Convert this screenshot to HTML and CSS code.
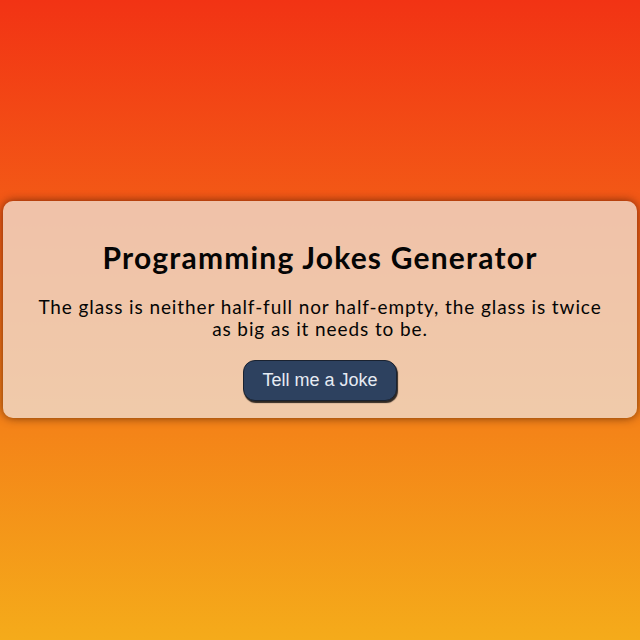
FILE: index.html
```html
<!DOCTYPE html>
<html>
<head>
<meta charset="utf-8">
<link rel="stylesheet" href="styles.css">
</head>
<body>
<div class="page">
  <div class="card">
    <h1 class="title">Programming Jokes Generator</h1>
    <p class="joke">The glass is neither half-full nor half-empty, the glass is twice as big as it needs to be.</p>
    <button class="btn">Tell me a Joke</button>
  </div>
</div>
</body>
</html>
```
FILE: styles.css
```css
html, body {
  margin: 0;
  padding: 0;
}
.page {
  height: 640px;
  background: linear-gradient(to bottom, #f23314, #f5ab1a);
  display: flex;
  align-items: center;
  justify-content: center;
  padding: 0 3px 22px;
  box-sizing: border-box;
}
.card {
  flex: 1;
  background: rgba(239, 222, 209, 0.79);
  border-radius: 10px;
  box-shadow: 0 0 10px rgba(60, 20, 0, 0.7);
  padding: 38px 34px 17px;
  display: flex;
  flex-direction: column;
  align-items: center;
  text-align: center;
  font-family: Lato, "Noto Sans", sans-serif;
  color: #050505;
}
.title {
  margin: 0;
  font-size: 30px;
  font-weight: 700;
  line-height: 36px;
  letter-spacing: 1.2px;
}
.joke {
  margin: 21px 0 20px;
  font-size: 19px;
  line-height: 22px;
  letter-spacing: 0.9px;
}
.btn {
  font-family: "Liberation Sans", Arial, sans-serif;
  font-size: 18px;
  color: #e6ebf3;
  background: #2d415f;
  border: 1px solid #1a2230;
  border-radius: 12px;
  padding: 0 18px;
  height: 41px;
  box-shadow: 1px 2px 1px rgba(0, 0, 0, 0.8);
}
```
